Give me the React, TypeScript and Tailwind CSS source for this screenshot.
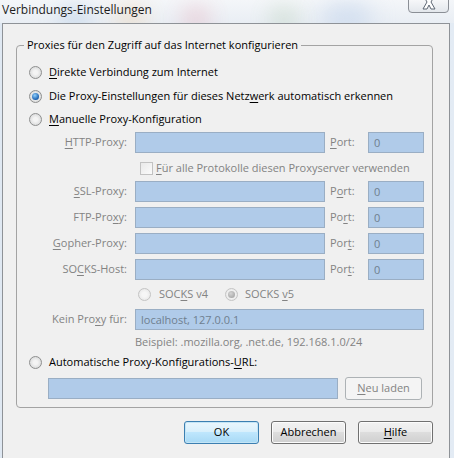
import React from 'react';

// Windows 7 style "Verbindungs-Einstellungen" dialog

const Radio: React.FC<{ checked?: boolean; disabled?: boolean }> = ({ checked, disabled }) => (
  <span
    className={
      'relative inline-flex shrink-0 w-[13px] h-[13px] rounded-full border items-center justify-center ' +
      (disabled
        ? 'border-[#c4c4c4] bg-[radial-gradient(circle_at_50%_50%,#f6f6f6_30%,#e2e2e2)]'
        : 'border-[#8e8f8f] bg-[radial-gradient(circle_at_50%_50%,#f4f4f4_25%,#cfd0d1)]')
    }
  >
    {checked && (
      <span
        className={
          'w-[7px] h-[7px] rounded-full ' +
          (disabled
            ? 'bg-[radial-gradient(circle_at_40%_35%,#d5d5d5,#9b9b9b)]'
            : 'bg-[radial-gradient(circle_at_40%_35%,#8fd0ff,#1a5fae_70%,#0d3f7c)]')
        }
      />
    )}
  </span>
);

const Checkbox: React.FC = () => (
  <span className="inline-block shrink-0 w-[13px] h-[13px] border border-[#c2c2c2] bg-[linear-gradient(135deg,#e9e9e9,#fbfbfb)]" />
);

const Field: React.FC<{ w: string; value?: string; h?: string }> = ({ w, value, h }) => (
  <div
    className={
      'border border-[#9aaec4] bg-[#b0cbe9] text-[#6f7f8f] pl-[5px] leading-[19px] ' +
      w +
      ' ' +
      (h || 'h-[21px]')
    }
  >
    {value}
  </div>
);

// text with one underlined mnemonic letter
const M: React.FC<{ a: string; u: string; b: string }> = ({ a, u, b }) => (
  <>
    {a}
    <u className="underline-offset-2">{u}</u>
    {b}
  </>
);

const ProxyRow: React.FC<{ label: React.ReactNode; port: React.ReactNode; mt: string }> = ({ label, port, mt }) => (
  <div className={'flex items-center h-[21px] ' + mt}>
    <div className="w-[110px] text-right text-[#838383]">{label}</div>
    <div className="ml-[8px]">
      <Field w="w-[190px]" />
    </div>
    <div className="ml-[5px] w-[38px] text-[#838383]">{port}</div>
    <Field w="w-[56px]" value="0" />
  </div>
);

const Button: React.FC<{ children: React.ReactNode; primary?: boolean; disabled?: boolean; w?: string }> = ({
  children,
  primary,
  disabled,
  w,
}) => (
  <div
    className={
      'flex items-center justify-center h-[23px] rounded-[3px] border ' +
      (w || 'w-[75px]') +
      ' ' +
      (disabled
        ? 'border-[#adb2b5] bg-[#f4f4f4] text-[#838383]'
        : primary
        ? 'border-[#3c7fb1] bg-[linear-gradient(#eaf6fd_0%,#d9f0fc_45%,#bee6fd_50%,#a7d9f5_100%)] shadow-[inset_0_0_0_1px_#c4e5f6] text-black'
        : 'border-[#707070] bg-[linear-gradient(#f2f2f2_0%,#ebebeb_45%,#dddddd_50%,#cfcfcf_100%)] shadow-[inset_0_0_0_1px_#fcfcfc] text-black')
    }
  >
    {children}
  </div>
);

export default function App() {
  return (
    <div className="relative w-[454px] h-[458px] overflow-hidden bg-[linear-gradient(90deg,#dfe8f2,#eef2f7_40%,#e3ebf4)] font-['Open_Sans',sans-serif] text-[11px] text-black">
      {/* title bar */}
      <div className="relative h-[23px] overflow-hidden bg-[linear-gradient(#f4f6f9,#e9eef4)]">
        <div className="absolute left-[60px] top-[8px] w-[30px] h-[20px] rounded-full bg-[#7da9d8] opacity-40 blur-md" />
        <div className="absolute left-[118px] top-[8px] w-[26px] h-[20px] rounded-full bg-[#f0b060] opacity-40 blur-md" />
        <div className="absolute left-[185px] top-[10px] w-[22px] h-[18px] rounded-full bg-[#d9536b] opacity-40 blur-md" />
        <div className="absolute left-[272px] top-[10px] w-[24px] h-[18px] rounded-full bg-[#7aa870] opacity-40 blur-md" />
        <div className="absolute left-[322px] top-[6px] w-[50px] h-[22px] rounded-full bg-[#a9c3e6] opacity-50 blur-md" />
        <div className="relative pl-[2px] pt-[1px] text-[12px] leading-[18px] text-[#1c1c1c]">Verbindungs-Einstellungen</div>
        <div className="absolute left-[408px] top-[-1px] w-[41px] h-[14px] rounded-b-[4px] border border-[#8b8f96] bg-[linear-gradient(#f6f7f9,#e3e7ec)] overflow-hidden">
          <svg className="absolute left-[13px] top-[-6px]" width="14" height="16" viewBox="0 0 14 16">
            <path
              d="M1 1 L5 1 L7 5 L9 1 L13 1 L9 8 L13 15 L9 15 L7 11 L5 15 L1 15 L5 8 Z"
              fill="#ffffff"
              stroke="#5d6673"
              strokeWidth="1"
            />
          </svg>
        </div>
      </div>

      {/* client area */}
      <div className="ml-[2px] w-[448px] h-[440px] border-l border-t border-r border-[#8e9297] bg-[#f0f0f0]">
        <fieldset className="ml-[13px] mt-[13px] w-[417px] border border-[#a3a3a3] rounded-[4px] pb-[7px]">
          <legend className="ml-[7px] px-[3px] leading-[16px]">Proxies für den Zugriff auf das Internet konfigurieren</legend>

          <div className="flex items-center h-[20px] mt-[9px] pl-[12px]">
            <Radio />
            <span className="ml-[7px]">
              <M a="" u="D" b="irekte Verbindung zum Internet" />
            </span>
          </div>
          <div className="flex items-center h-[20px] mt-[4px] pl-[12px]">
            <Radio checked />
            <span className="ml-[7px]">
              <M a="Die Proxy-Einstellungen für dieses Netz" u="w" b="erk automatisch erkennen" />
            </span>
          </div>
          <div className="flex items-center h-[20px] mt-[3px] pl-[12px]">
            <Radio />
            <span className="ml-[7px]">
              <M a="" u="M" b="anuelle Proxy-Konfiguration" />
            </span>
          </div>

          <ProxyRow mt="mt-[3px]" label={<M a="" u="H" b="TTP-Proxy:" />} port={<M a="" u="P" b="ort:" />} />

          <div className="flex items-center h-[20px] mt-[5px] pl-[123px] text-[#838383]">
            <Checkbox />
            <span className="ml-[3px]">
              <M a="" u="F" b="ür alle Protokolle diesen Proxyserver verwenden" />
            </span>
          </div>

          <ProxyRow mt="mt-[3px]" label={<M a="" u="S" b="SL-Proxy:" />} port={<M a="P" u="o" b="rt:" />} />
          <ProxyRow mt="mt-[5px]" label={<M a="FTP-Pro" u="x" b="y:" />} port={<M a="Po" u="r" b="t:" />} />
          <ProxyRow mt="mt-[5px]" label={<M a="" u="G" b="opher-Proxy:" />} port={<M a="Por" u="t" b=":" />} />
          <ProxyRow mt="mt-[5px]" label={<M a="SO" u="C" b="KS-Host:" />} port={<M a="Por" u="t" b=":" />} />

          <div className="flex items-center h-[20px] mt-[4px] pl-[121px] text-[#838383]">
            <Radio disabled />
            <span className="ml-[8px]">
              <M a="SOC" u="K" b="S v4" />
            </span>
            <span className="ml-[17px]">
              <Radio checked disabled />
            </span>
            <span className="ml-[7px]">
              <M a="SOCKS " u="v" b="5" />
            </span>
          </div>

          <div className="flex items-center h-[21px] mt-[5px]">
            <div className="w-[110px] text-right text-[#838383]">
              <M a="Kein Pro" u="x" b="y für:" />
            </div>
            <div className="ml-[8px]">
              <Field w="w-[289px]" value="localhost, 127.0.0.1" />
            </div>
          </div>

          <div className="h-[18px] leading-[18px] mt-[3px] pl-[118px] text-[#838383]">
            Beispiel: .mozilla.org, .net.de, 192.168.1.0/24
          </div>

          <div className="flex items-center h-[20px] mt-[1px] pl-[12px]">
            <Radio />
            <span className="ml-[7px]">
              <M a="Automatische Proxy-Konfigurations-" u="U" b="RL:" />
            </span>
          </div>

          <div className="flex items-center h-[23px] mt-[5px] pl-[31px]">
            <Field w="w-[290px]" />
            <div className="ml-[7px]">
              <Button disabled w="w-[77px]">
                <M a="" u="N" b="eu laden" />
              </Button>
            </div>
          </div>
        </fieldset>

        <div className="flex justify-end gap-[12px] mt-[13px] ml-[13px] w-[417px]">
          <Button primary>OK</Button>
          <Button>Abbrechen</Button>
          <Button>
            <M a="" u="H" b="ilfe" />
          </Button>
        </div>
      </div>
    </div>
  );
}
